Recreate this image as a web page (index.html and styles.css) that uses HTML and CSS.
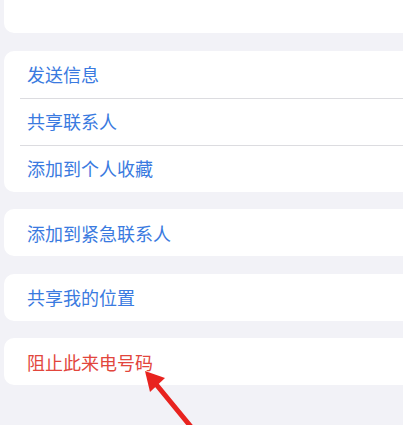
FILE: index.html
```html
<!DOCTYPE html>
<html lang="zh">
<head>
<meta charset="utf-8">
<link rel="stylesheet" href="styles.css">
</head>
<body>
<div class="page">
  <div class="card card-top"></div>
  <div class="card">
    <div class="row blue">发送信息</div>
    <div class="row blue">共享联系人</div>
    <div class="row blue">添加到个人收藏</div>
  </div>
  <div class="card">
    <div class="row blue">添加到紧急联系人</div>
  </div>
  <div class="card">
    <div class="row blue">共享我的位置</div>
  </div>
  <div class="card">
    <div class="row red">阻止此来电号码</div>
  </div>
</div>
<svg class="arrow" width="403" height="425" viewBox="0 0 403 425">
  <line x1="155" y1="383" x2="192" y2="428" stroke="#e8231f" stroke-width="5" stroke-linecap="round"/>
  <polygon points="145,371 165,378 150,392" fill="#e8231f"/>
</svg>
</body>
</html>
```

FILE: styles.css
```css
html, body {
  margin: 0;
  padding: 0;
  background: #f2f2f7;
  width: 403px;
  height: 425px;
  overflow: hidden;
  font-family: "Noto Sans CJK SC", "Noto Sans", sans-serif;
}
.page {
  display: flex;
  flex-direction: column;
  gap: 17.5px;
  padding-left: 4px;
  margin-right: -20px;
}
.card {
  background: #ffffff;
  border-radius: 10px;
  overflow: hidden;
}
.card-top {
  height: 33px;
  border-radius: 0 0 10px 10px;
}
.row {
  height: 47px;
  display: flex;
  align-items: center;
  padding-left: 23px;
  font-size: 18px;
  position: relative;
}
.row + .row::before {
  content: "";
  position: absolute;
  left: 16px;
  right: 0;
  top: 0;
  height: 1px;
  background: #dcdce0;
}
.blue { color: #3a7ae0; }
.red { color: #e2463c; }
.arrow {
  position: absolute;
  left: 0;
  top: 0;
}
```
